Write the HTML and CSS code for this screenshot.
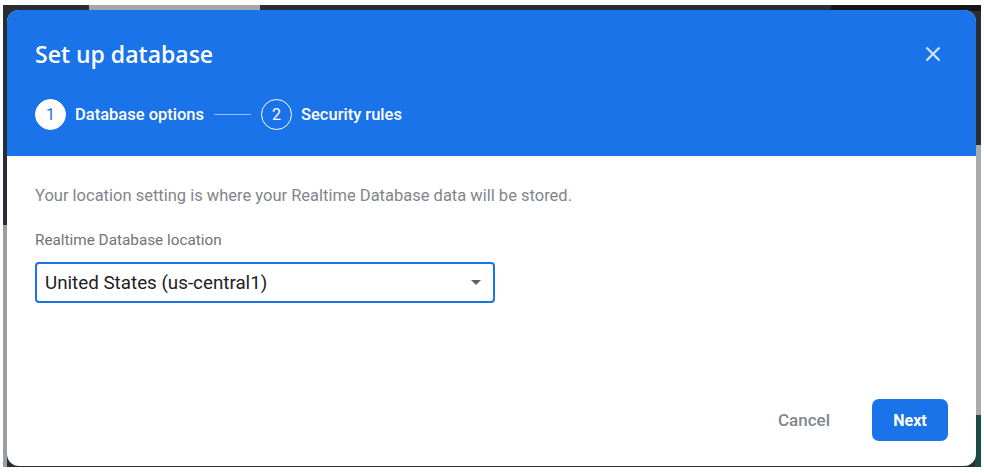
FILE: index.html
```html
<!DOCTYPE html>
<html>
<head>
<meta charset="utf-8">
<link rel="stylesheet" href="styles.css">
</head>
<body>
<div class="backdrop">
  <div class="bd-tab">Create Database</div>
  <div class="bd-top-right"></div>
  <div class="bd-left-gray"></div>
  <div class="bd-right-gray"></div>
  <div class="bd-right-teal"></div>
  <div class="dialog">
    <header class="dlg-header">
      <div class="title-row">
        <h1 class="title">Set up database</h1>
        <button class="close" aria-label="Close">
          <svg width="16" height="16" viewBox="0 0 16 16"><path d="M1.5 1.5L14.5 14.5M14.5 1.5L1.5 14.5" stroke="currentColor" stroke-width="2.3"/></svg>
        </button>
      </div>
      <div class="stepper">
        <div class="step active"><span class="num">1</span><span class="label">Database options</span></div>
        <span class="connector"></span>
        <div class="step"><span class="num">2</span><span class="label">Security rules</span></div>
      </div>
    </header>
    <main class="dlg-body">
      <p class="desc">Your location setting is where your Realtime Database data will be stored.</p>
      <div class="field-label">Realtime Database location</div>
      <div class="select">
        <span class="select-value">United States (us-central1)</span>
        <span class="caret"></span>
      </div>
    </main>
    <footer class="dlg-footer">
      <button class="btn-text">Cancel</button>
      <button class="btn-primary">Next</button>
    </footer>
  </div>
</div>
</body>
</html>
```
FILE: styles.css
```css
html, body {
  margin: 0;
  padding: 0;
  background: #ffffff;
  font-family: Roboto, "Liberation Sans", Arial, sans-serif;
}
.backdrop {
  position: relative;
  margin: 5px 0 0 3px;
  width: 978px;
  height: 462px;
  background: #272e36;
  padding: 5px 0 0 4px;
  box-sizing: border-box;
}
.bd-tab {
  position: absolute;
  left: 86px;
  top: 0;
  width: 171px;
  height: 6px;
  background: #a4a6a9;
  color: #3a3d40;
  font-size: 14px;
  line-height: 26px;
  overflow: hidden;
  text-align: center;
}
.bd-top-right {
  position: absolute;
  right: 0;
  top: 0;
  width: 150px;
  height: 6px;
  background: #12171c;
}
.bd-left-gray {
  position: absolute;
  left: 0;
  top: 220px;
  width: 4px;
  bottom: 0;
  background: #9a9da1;
}
.bd-right-gray {
  position: absolute;
  right: 0;
  top: 140px;
  width: 6px;
  height: 270px;
  background: #a9abad;
}
.bd-right-teal {
  position: absolute;
  right: 0;
  top: 410px;
  width: 6px;
  bottom: 0;
  background: #1b4b45;
}
.dialog {
  position: relative;
  width: 969px;
  height: 456px;
  background: #ffffff;
  border-radius: 12px;
  overflow: hidden;
  display: flex;
  flex-direction: column;
}
.dlg-header {
  background: #1a73e8;
  height: 146px;
  box-sizing: border-box;
  padding: 28px 28px 0 28px;
  color: #ffffff;
}
.title-row {
  display: flex;
  justify-content: space-between;
  align-items: center;
  height: 32px;
}
.title {
  margin: 0;
  font-family: "Open Sans", Roboto, sans-serif;
  font-weight: 600;
  font-size: 23px;
  line-height: 32px;
  letter-spacing: 0;
}
.close {
  background: none;
  border: 0;
  padding: 0;
  margin-right: 7px;
  color: rgba(255,255,255,0.8);
  width: 16px;
  height: 16px;
  display: flex;
}
.stepper {
  display: flex;
  align-items: center;
  margin-top: 29px;
  height: 31px;
}
.step {
  display: flex;
  align-items: center;
}
.num {
  width: 29px;
  height: 29px;
  border-radius: 50%;
  border: 1px solid #ffffff;
  display: flex;
  align-items: center;
  justify-content: center;
  font-size: 16px;
  color: #ffffff;
}
.step.active .num {
  background: #ffffff;
  color: #1a73e8;
}
.label {
  margin-left: 9px;
  font-size: 16.5px;
  font-weight: 500;
}
.connector {
  width: 37px;
  height: 1px;
  background: rgba(255,255,255,0.55);
  margin: 0 10px;
}
.dlg-body {
  flex: 1;
  padding: 30px 28px 0 28px;
}
.desc {
  margin: 0;
  font-size: 16.5px;
  color: #80868b;
  line-height: 20px;
}
.field-label {
  margin-top: 24px;
  font-size: 15.3px;
  color: #6f7479;
  line-height: 20px;
}
.select {
  margin-top: 12px;
  width: 460px;
  height: 41px;
  box-sizing: border-box;
  border: 2px solid #1a73e8;
  border-radius: 4px;
  display: flex;
  align-items: center;
  justify-content: space-between;
  padding: 0 12px 0 8px;
}
.select-value {
  font-size: 18.8px;
  color: #202124;
}
.caret {
  width: 0;
  height: 0;
  border-left: 5px solid transparent;
  border-right: 5px solid transparent;
  border-top: 5px solid #5f6368;
}
.dlg-footer {
  display: flex;
  justify-content: flex-end;
  align-items: center;
  padding: 0 28px 25px 0;
  gap: 20px;
}
.btn-text {
  background: none;
  border: 0;
  font-family: Roboto, sans-serif;
  font-size: 17px;
  font-weight: 500;
  color: #80868b;
  padding: 0 22px;
  height: 42px;
}
.btn-primary {
  background: #1a73e8;
  border: 0;
  border-radius: 7px;
  color: #ffffff;
  font-family: Roboto, sans-serif;
  font-size: 16px;
  font-weight: 700;
  width: 76px;
  height: 42px;
}
```
